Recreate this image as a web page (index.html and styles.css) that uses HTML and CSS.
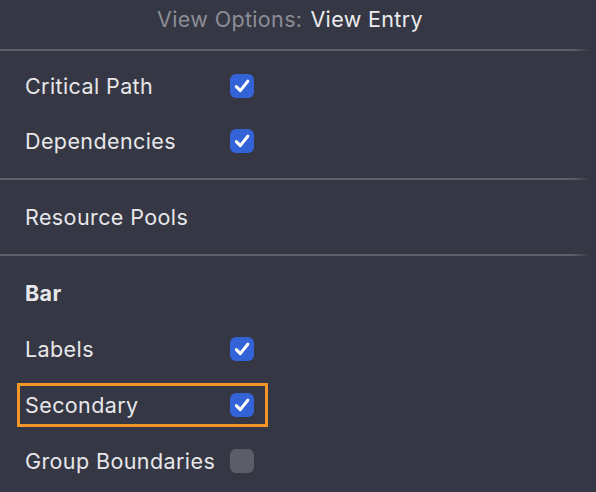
FILE: index.html
```html
<!DOCTYPE html>
<html>
<head>
<meta charset="utf-8">
<link rel="stylesheet" href="styles.css">
</head>
<body>
<div class="panel">
  <div class="header"><span class="muted">View Options:</span> <span class="title">View Entry</span></div>
  <div class="sep"></div>
  <div class="section first">
    <div class="row"><span class="label">Critical Path</span><span class="cb on"><svg viewBox="0 0 24 24"><path d="M6.3 12.6 L10.3 16.6 L17.8 7.2"/></svg></span></div>
    <div class="row"><span class="label">Dependencies</span><span class="cb on"><svg viewBox="0 0 24 24"><path d="M6.3 12.6 L10.3 16.6 L17.8 7.2"/></svg></span></div>
  </div>
  <div class="sep"></div>
  <div class="section">
    <div class="row"><span class="label">Resource Pools</span></div>
  </div>
  <div class="sep"></div>
  <div class="section">
    <div class="row"><span class="label bold">Bar</span></div>
    <div class="row"><span class="label">Labels</span><span class="cb on"><svg viewBox="0 0 24 24"><path d="M6.3 12.6 L10.3 16.6 L17.8 7.2"/></svg></span></div>
    <div class="row highlight"><span class="label">Secondary</span><span class="cb on"><svg viewBox="0 0 24 24"><path d="M6.3 12.6 L10.3 16.6 L17.8 7.2"/></svg></span></div>
    <div class="row"><span class="label">Group Boundaries</span><span class="cb off"></span></div>
  </div>
</div>
</body>
</html>
```

FILE: styles.css
```css
html, body {
  margin: 0;
  padding: 0;
  background: #353744;
}
body {
  width: 596px;
  height: 492px;
  overflow: hidden;
  font-family: Inter, "Liberation Sans", sans-serif;
  color: #e7e7ea;
}
.panel {
  display: flex;
  flex-direction: column;
}
.header {
  height: 49px;
  display: flex;
  align-items: center;
  justify-content: center;
  gap: 8px;
  font-size: 21.5px;
  letter-spacing: 0.35px;
  padding: 0 16px 12px 0;
  box-sizing: border-box;
}
.muted { color: #8c8d96; }
.title { color: #ececee; }
.sep {
  height: 2px;
  background: linear-gradient(to right, #5c5e68 0%, #5c5e68 96%, rgba(92,94,104,0) 99%);
}
.section {
  padding: 9px 0 9px;
  display: flex;
  flex-direction: column;
}
.section.first {
  padding: 7px 0 10px;
}
.row {
  position: relative;
  height: 56px;
  display: flex;
  align-items: center;
  padding-left: 25px;
}
.section.first .row {
  height: 55px;
}
.label {
  width: 205px;
  font-size: 21.5px;
  letter-spacing: 0.4px;
}
.bold { font-weight: 700; }
.cb {
  width: 24px;
  height: 24px;
  border-radius: 6px;
  box-sizing: border-box;
  display: flex;
}
.cb.on { background: #3463d8; }
.cb.off { background: #5b5d68; }
.cb svg { width: 24px; height: 24px; }
.cb svg path {
  fill: none;
  stroke: #fff;
  stroke-width: 3;
  stroke-linecap: round;
  stroke-linejoin: round;
}
.highlight::before {
  content: "";
  position: absolute;
  left: 17px;
  top: 6px;
  width: 251px;
  height: 44px;
  border: 3px solid #f2962a;
  box-sizing: border-box;
}
```
